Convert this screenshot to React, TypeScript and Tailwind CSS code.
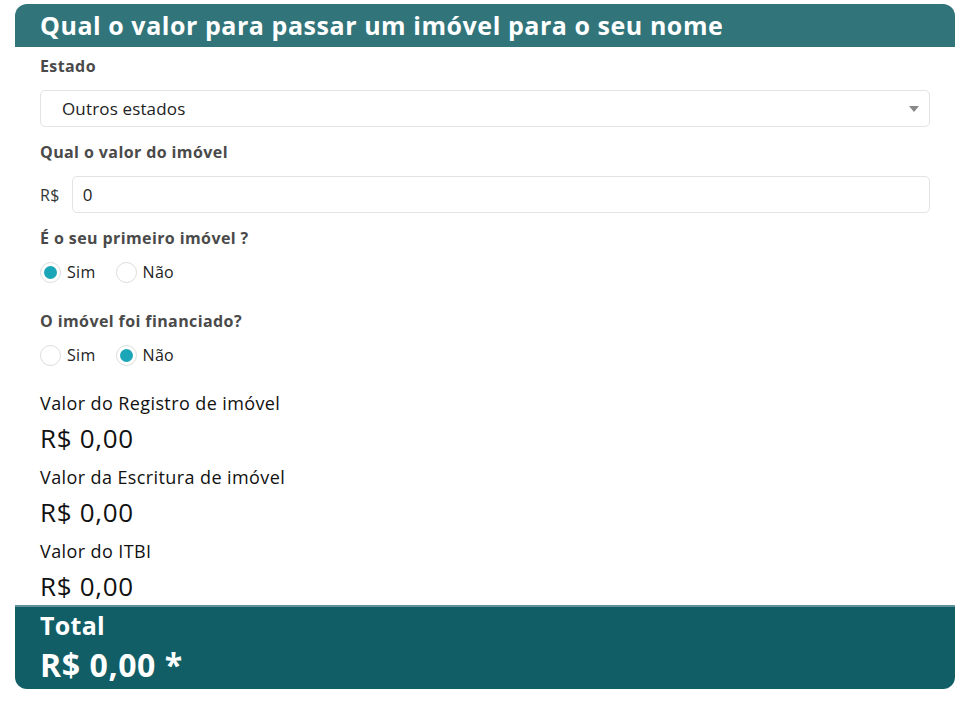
import { useState } from "react";

const font = { fontFamily: '"Open Sans", "Liberation Sans", sans-serif' };

function Radio({ checked, label, onClick }: { checked: boolean; label: string; onClick: () => void }) {
  return (
    <button onClick={onClick} className="flex items-center gap-[6px] text-[16px] tracking-[0.3px] text-[#222]">
      <span className="flex h-[21px] w-[21px] items-center justify-center rounded-full border border-[#dcdcdc] bg-white">
        {checked && <span className="h-[13px] w-[13px] rounded-full bg-[#1ba6b8]" />}
      </span>
      {label}
    </button>
  );
}

export default function App() {
  const [primeiro, setPrimeiro] = useState(true);
  const [financiado, setFinanciado] = useState(false);
  const [valor, setValor] = useState("0");

  return (
    <div className="min-h-screen bg-white pt-[4px]" style={font}>
      <div className="mx-[15px] w-[940px]">
        <div className="flex h-[43px] items-center rounded-t-[12px] bg-[#31757b] px-[25px]">
          <h1 className="text-[25px] font-bold leading-none tracking-[0.55px] text-white">Qual o valor para passar um imóvel para o seu nome</h1>
        </div>

        <div className="px-[25px]">
          <p className="mt-[9px] text-[16px] font-bold leading-[20px] tracking-[0.4px] text-[#4a4a4a]">Estado</p>
          <div className="relative mt-[14px] flex h-[37px] items-center rounded-[5px] border border-[#e3e3e3] pl-[21px] text-[17px] tracking-[0.15px] text-[#222]">
            Outros estados
            <span className="absolute right-[10px] top-[15px] h-0 w-0 border-x-[5px] border-t-[6px] border-x-transparent border-t-[#888]" />
          </div>

          <p className="mt-[15px] text-[16px] font-bold leading-[20px] tracking-[0.4px] text-[#4a4a4a]">Qual o valor do imóvel</p>
          <div className="mt-[14px] flex items-center gap-[12px]">
            <span className="text-[16px] tracking-[0.3px] text-[#333]">R$</span>
            <input value={valor} onChange={(e) => setValor(e.target.value)} className="h-[37px] flex-1 rounded-[5px] border border-[#e3e3e3] px-[10px] text-[17px] text-[#222] outline-none" />
          </div>

          <p className="mt-[15px] text-[16px] font-bold leading-[20px] tracking-[0.4px] text-[#4a4a4a]">É o seu primeiro imóvel ?</p>
          <div className="mt-[12px] flex items-center gap-[20px]">
            <Radio checked={primeiro} label="Sim" onClick={() => setPrimeiro(true)} />
            <Radio checked={!primeiro} label="Não" onClick={() => setPrimeiro(false)} />
          </div>

          <p className="mt-[27px] text-[16px] font-bold leading-[20px] tracking-[0.4px] text-[#4a4a4a]">O imóvel foi financiado?</p>
          <div className="mt-[12px] flex items-center gap-[20px]">
            <Radio checked={financiado} label="Sim" onClick={() => setFinanciado(true)} />
            <Radio checked={!financiado} label="Não" onClick={() => setFinanciado(false)} />
          </div>

          <div className="mt-[24px] text-[#111]">
            <p className="text-[18px] leading-[24px] tracking-[0.4px]">Valor do Registro de imóvel</p>
            <p className="mt-[9px] text-[26px] leading-[28px] tracking-[0.7px]">R$ 0,00</p>
            <p className="mt-[13px] text-[18px] leading-[24px] tracking-[0.4px]">Valor da Escritura de imóvel</p>
            <p className="mt-[9px] text-[26px] leading-[28px] tracking-[0.7px]">R$ 0,00</p>
            <p className="mt-[13px] text-[18px] leading-[24px] tracking-[0.4px]">Valor do ITBI</p>
            <p className="mt-[9px] text-[26px] leading-[28px] tracking-[0.7px]">R$ 0,00</p>
          </div>
        </div>

        <div className="mt-[5px] h-[84px] rounded-b-[12px] border-t-2 border-[#5f9299] bg-[#115e67] px-[25px] pt-[2px] text-white">
          <p className="text-[25px] font-bold leading-[32px] tracking-[0.3px]">Total</p>
          <p className="mt-[5px] text-[32px] font-bold leading-[38px] tracking-[0.6px]">R$ 0,00 *</p>
        </div>
      </div>
    </div>
  );
}
